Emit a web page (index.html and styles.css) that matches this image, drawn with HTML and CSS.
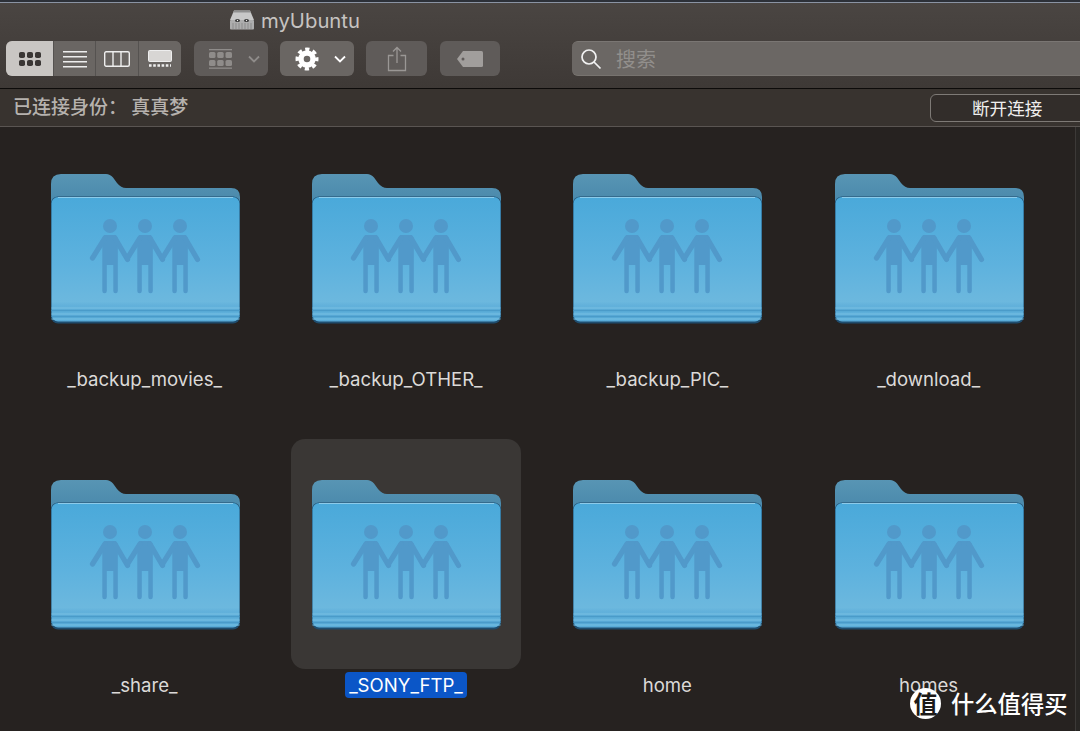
FILE: index.html
```html
<!DOCTYPE html>
<html lang="zh">
<head>
<meta charset="utf-8">
<title>myUbuntu</title>
<link rel="stylesheet" href="styles.css">
</head>
<body>
<svg class="defs" width="0" height="0" aria-hidden="true">
  <defs>
    <linearGradient id="front" x1="0" y1="0" x2="0" y2="1">
      <stop offset="0" stop-color="#4aa9da"/>
      <stop offset=".55" stop-color="#5eb2de"/>
      <stop offset=".84" stop-color="#6cb8de"/>
      <stop offset=".87" stop-color="#62b1db"/>
      <stop offset="1" stop-color="#58abd7"/>
    </linearGradient>
    <linearGradient id="back" x1="0" y1="0" x2="0" y2="1">
      <stop offset="0" stop-color="#5895b4"/>
      <stop offset="1" stop-color="#3f7fa4"/>
    </linearGradient>
    <g id="person">
      <circle cx="0" cy="0" r="7"/>
      <path d="M-5.500 9H5.500L7.800 12V65a2.200 2.200 0 0 1-4.500 0V39H-3.200V65a2.200 2.200 0 0 1-4.500 0V12Z"/>
      <path d="M-5 12L-17.500 32M5 12L17.500 33.500" fill="none" stroke-width="5.200" stroke-linecap="round"/>
    </g>
    <symbol id="folder" viewBox="0 0 190 150">
      <path d="M0 10Q0 0 10 0H55Q59 0 62 3.500L66 9Q70 14 75 14H180Q189 14 189 23V50H0Z" fill="url(#back)"/>
      <rect x="0" y="22.500" width="189" height="127" rx="7" fill="#1f4d6e"/>
      <rect x="0.500" y="23" width="188" height="124.500" rx="6.500" fill="url(#front)"/>
      <path d="M7 23.500H182" stroke="#8ccbea" stroke-width="1" fill="none"/>
      <path d="M0.500 136.500H188.500M0.500 142.500H188.500" stroke="#4a9bc9" stroke-width="1.300" fill="none"/>
      <path d="M0.500 134H188.500M0.500 140H188.500M0.500 145H188.500" stroke="#78c0e3" stroke-width="1" fill="none"/>
      <g fill="#5199ca" stroke="#5199ca" stroke-width="0">
        <use href="#person" x="59" y="52"/>
        <use href="#person" x="94" y="52"/>
        <use href="#person" x="129" y="52"/>
      </g>
    </symbol>
  </defs>
</svg>

<div class="app">
  <div class="topline"></div>

  <header class="toolbar">
    <div class="title">
      <svg class="drive" viewBox="0 0 26 20" width="26" height="20">
        <path d="M5 0.500H21L25 10H1Z" fill="#c8c8c8"/>
        <path d="M5 0.500H21L21.800 2.500H4.200Z" fill="#8f8f8f"/>
        <rect x="1" y="10" width="24" height="9.500" rx="1" fill="#adadad"/>
        <path d="M4 13V19M7 13V19M10 13V19M13 13V19M16 13V19M19 13V19M22 13V19" stroke="#8b8b8b" stroke-width="1"/>
        <ellipse cx="8.500" cy="10.500" rx="2.500" ry="1.500" fill="#333"/>
        <ellipse cx="17.500" cy="10.500" rx="2.500" ry="1.500" fill="#333"/>
        <circle cx="8.500" cy="10.500" r=".7" fill="#eee"/>
        <circle cx="17.500" cy="10.500" r=".7" fill="#eee"/>
      </svg>
      <span>myUbuntu</span>
    </div>
    <div class="tools">
      <div class="seg">
        <button class="seg-btn seg-on w46">
          <svg viewBox="0 0 24 18" width="24" height="18" fill="#3a3634">
            <rect x="1" y="2" width="6" height="6" rx="1.800"/><rect x="9" y="2" width="6" height="6" rx="1.800"/><rect x="17" y="2" width="6" height="6" rx="1.800"/>
            <rect x="1" y="10" width="6" height="6" rx="1.800"/><rect x="9" y="10" width="6" height="6" rx="1.800"/><rect x="17" y="10" width="6" height="6" rx="1.800"/>
          </svg>
        </button>
        <button class="seg-btn w42">
          <svg viewBox="0 0 24 18" width="24" height="18" fill="#eee"><rect y="1" width="24" height="1.500"/><rect y="6" width="24" height="1.500"/><rect y="11" width="24" height="1.500"/><rect y="16" width="24" height="1.500"/></svg>
        </button>
        <button class="seg-btn w43">
          <svg viewBox="0 0 26 16" width="26" height="16" fill="none" stroke="#eee" stroke-width="1.400"><rect x="0.700" y="0.700" width="24.600" height="14.600" rx="1.500"/><path d="M9 1V15M17 1V15"/></svg>
        </button>
        <button class="seg-btn w43">
          <svg viewBox="0 0 24 18" width="24" height="18"><rect x="0.500" y="0.500" width="23" height="11" rx="1" fill="#d8d6d4" stroke="#eee"/><path d="M1 15.500H23" stroke="#eee" stroke-width="2.400" stroke-dasharray="2.600 1.600"/></svg>
        </button>
      </div>
      <button class="btn w74 dim">
        <svg viewBox="0 0 24 20" width="24" height="20" fill="#8f8c8a"><rect y="0" width="23" height="1.300"/><rect y="18.500" width="23" height="1.300"/><rect x="0" y="3" width="6.500" height="6" rx="1.500"/><rect x="8.200" y="3" width="6.500" height="6" rx="1.500"/><rect x="16.500" y="3" width="6.500" height="6" rx="1.500"/><rect x="0" y="11" width="6.500" height="6" rx="1.500"/><rect x="8.200" y="11" width="6.500" height="6" rx="1.500"/><rect x="16.500" y="11" width="6.500" height="6" rx="1.500"/></svg>
        <svg class="chev" viewBox="0 0 12 8" width="12" height="8" fill="none" stroke="#8f8c8a" stroke-width="1.800"><path d="M1 1.500L6 6.500L11 1.500"/></svg>
      </button>
      <button class="btn w74">
        <svg viewBox="0 0 24 24" width="24" height="24" fill="none" stroke="#fff"><circle cx="12" cy="12" r="6" stroke-width="5.400"/><circle cx="12" cy="12" r="9.700" stroke-width="3.600" stroke-dasharray="4.200 3.420" stroke-dashoffset="2.100"/></svg>
        <svg class="chev" viewBox="0 0 12 8" width="12" height="8" fill="none" stroke="#fff" stroke-width="1.800"><path d="M1 1.500L6 6.500L11 1.500"/></svg>
      </button>
      <button class="btn w61 dim">
        <svg viewBox="0 0 20 26" width="20" height="26" fill="none" stroke="#9a9795" stroke-width="1.300"><path d="M6.500 9.500H1.500V24.500H18.500V9.500H13.500"/><path d="M10 17V1.500M6 5.500L10 1.500L14 5.500"/></svg>
      </button>
      <button class="btn w60 dim">
        <svg viewBox="0 0 28 18" width="28" height="18"><path d="M7 1H25.500A1.500 1.500 0 0 1 27 2.500V15.500A1.500 1.500 0 0 1 25.500 17H7L1 9Z" fill="#a19e9c"/><circle cx="7" cy="9" r="1.500" fill="#5f5b59"/></svg>
      </button>
      <div class="search">
        <svg viewBox="0 0 22 22" width="22" height="22" fill="none" stroke="#f2f2f2" stroke-width="1.700"><circle cx="9" cy="9" r="7"/><path d="M14 14L20.500 20.500"/></svg>
        <span>搜索</span>
      </div>
    </div>
  </header>

  <div class="status">
    <span class="who">已连接身份： 真真梦</span>
    <button class="disconnect">断开连接</button>
  </div>

  <main class="grid">
    <div class="item"><div class="icon"><svg class="folder" width="190" height="150"><use href="#folder"/></svg></div><div class="name">_backup_movies_</div></div>
    <div class="item"><div class="icon"><svg class="folder" width="190" height="150"><use href="#folder"/></svg></div><div class="name">_backup_OTHER_</div></div>
    <div class="item"><div class="icon"><svg class="folder" width="190" height="150"><use href="#folder"/></svg></div><div class="name">_backup_PIC_</div></div>
    <div class="item"><div class="icon"><svg class="folder" width="190" height="150"><use href="#folder"/></svg></div><div class="name">_download_</div></div>
    <div class="item"><div class="icon"><svg class="folder" width="190" height="150"><use href="#folder"/></svg></div><div class="name">_share_</div></div>
    <div class="item selected"><div class="icon"><svg class="folder" width="190" height="150"><use href="#folder"/></svg></div><div class="name">_SONY_FTP_</div></div>
    <div class="item"><div class="icon"><svg class="folder" width="190" height="150"><use href="#folder"/></svg></div><div class="name">home</div></div>
    <div class="item"><div class="icon"><svg class="folder" width="190" height="150"><use href="#folder"/></svg></div><div class="name">homes</div></div>
  </main>

  <div class="gutter"></div>

  <div class="watermark">
    <span class="wm-badge">值</span>
    <span class="wm-text">什么值得买</span>
  </div>
</div>
</body>
</html>
```

FILE: styles.css
```css
* { box-sizing: border-box; }
html, body { margin: 0; padding: 0; background: #262220; }
body { font-family: "Inter", "Liberation Sans", "Noto Sans CJK SC", sans-serif; overflow: hidden; }
.defs { position: absolute; }
.app { position: relative; width: 1080px; height: 731px; overflow: hidden; display: flex; flex-direction: column; }

.topline { height: 3px; background: #2c3038; border-bottom: 1px solid #8a93a3; }

.toolbar { height: 86px; background: linear-gradient(#4a4542, #3e3936); border-bottom: 1px solid #0d0b0a; display: flex; flex-direction: column; flex: none; }
.title { height: 38px; padding: 0 0 4px 229px; display: flex; align-items: center; gap: 6px; color: #c6c3c1; }
.title span { font-size: 20.3px; }
.tools { display: flex; align-items: flex-start; padding-left: 6px; height: 35px; }

button { font: inherit; border: 0; padding: 0; margin: 0; }
.seg { display: flex; height: 35px; border-radius: 6px; overflow: hidden; background: #6a6663; flex: none; }
.seg-btn { height: 35px; display: flex; align-items: center; justify-content: center; background: #6a6663; border-left: 1px solid #555250; }
.seg-on { background: #c9c6c3; border-left: 0; }
.w46 { width: 47px; }
.w42 { width: 42px; }
.w43 { width: 43px; }

.btn { height: 35px; background: #6a6663; border-radius: 6px; display: flex; align-items: center; justify-content: center; flex: none; margin-left: 12px; }
.btn.w74 { width: 74px; gap: 14.5px; justify-content: flex-start; padding-left: 15px; }
.btn.w61 { width: 61px; }
.btn.w60 { width: 60px; margin-left: 13px; }
.btn.dim { background: #5f5b59; }
.seg + .btn { margin-left: 13px; }

.search { margin-left: 72px; width: 540px; flex: none; height: 35px; background: #6b6764; border-radius: 6px 0 0 6px; border-top: 1px solid #7a7673; border-bottom: 1px solid #77736f; display: flex; align-items: center; padding-left: 8px; gap: 14px; color: #928f8c; font-size: 20px; }
.search span { font-family: "Noto Sans CJK SC", sans-serif; }

.status { height: 38px; flex: none; background: #38332f; border-bottom: 1px solid #5a5552; display: flex; align-items: center; justify-content: space-between; padding-left: 13px; }
.who { font-family: "Noto Sans CJK SC", sans-serif; font-size: 19px; color: #b6b2ae; font-weight: 500; position: relative; top: -2px; }
.disconnect { width: 160px; height: 28px; margin-right: -10px; background: #322d2a; border: 1px solid #7e7a76; border-radius: 6px; color: #f0efee; font-family: "Noto Sans CJK SC", sans-serif; font-size: 17.6px; text-align: left; padding-left: 41px; line-height: 24px; }

.grid { display: grid; grid-template-columns: repeat(4, 261.33px); grid-auto-rows: 259px; row-gap: 47px; padding: 6px 0 0 14px; background: #262220; flex: 1; min-height: 0; }
.item { display: flex; flex-direction: column; align-items: center; }
.icon { width: 230px; height: 230px; padding-top: 41px; display: flex; justify-content: center; align-items: flex-start; border-radius: 14px; flex: none; }
.selected .icon { background: #3a3735; }
.folder { display: block; margin-left: 2px; }
.name { margin-top: 3px; height: 26px; line-height: 27px; padding: 0 4px; font-size: 18.6px; color: #dcdad8; border-radius: 4px; white-space: nowrap; }
.selected .name { background: #0b56c7; color: #fff; }

.gutter { position: absolute; left: 1075px; top: 127px; bottom: 0; width: 5px; border-left: 1px solid #3c3937; background: #282624; }

.watermark { position: absolute; left: 910px; top: 687px; display: flex; align-items: center; gap: 10px; height: 33px; }
.wm-badge { width: 31px; height: 31px; border-radius: 50%; background: #fff; color: #1c1a19; font-family: "Noto Sans CJK SC", sans-serif; font-size: 24px; font-weight: 700; line-height: 30px; text-align: center; }
.wm-text { font-family: "Noto Sans CJK SC", sans-serif; font-size: 23.3px; color: #fff; font-weight: 500; line-height: 33px; }
```
